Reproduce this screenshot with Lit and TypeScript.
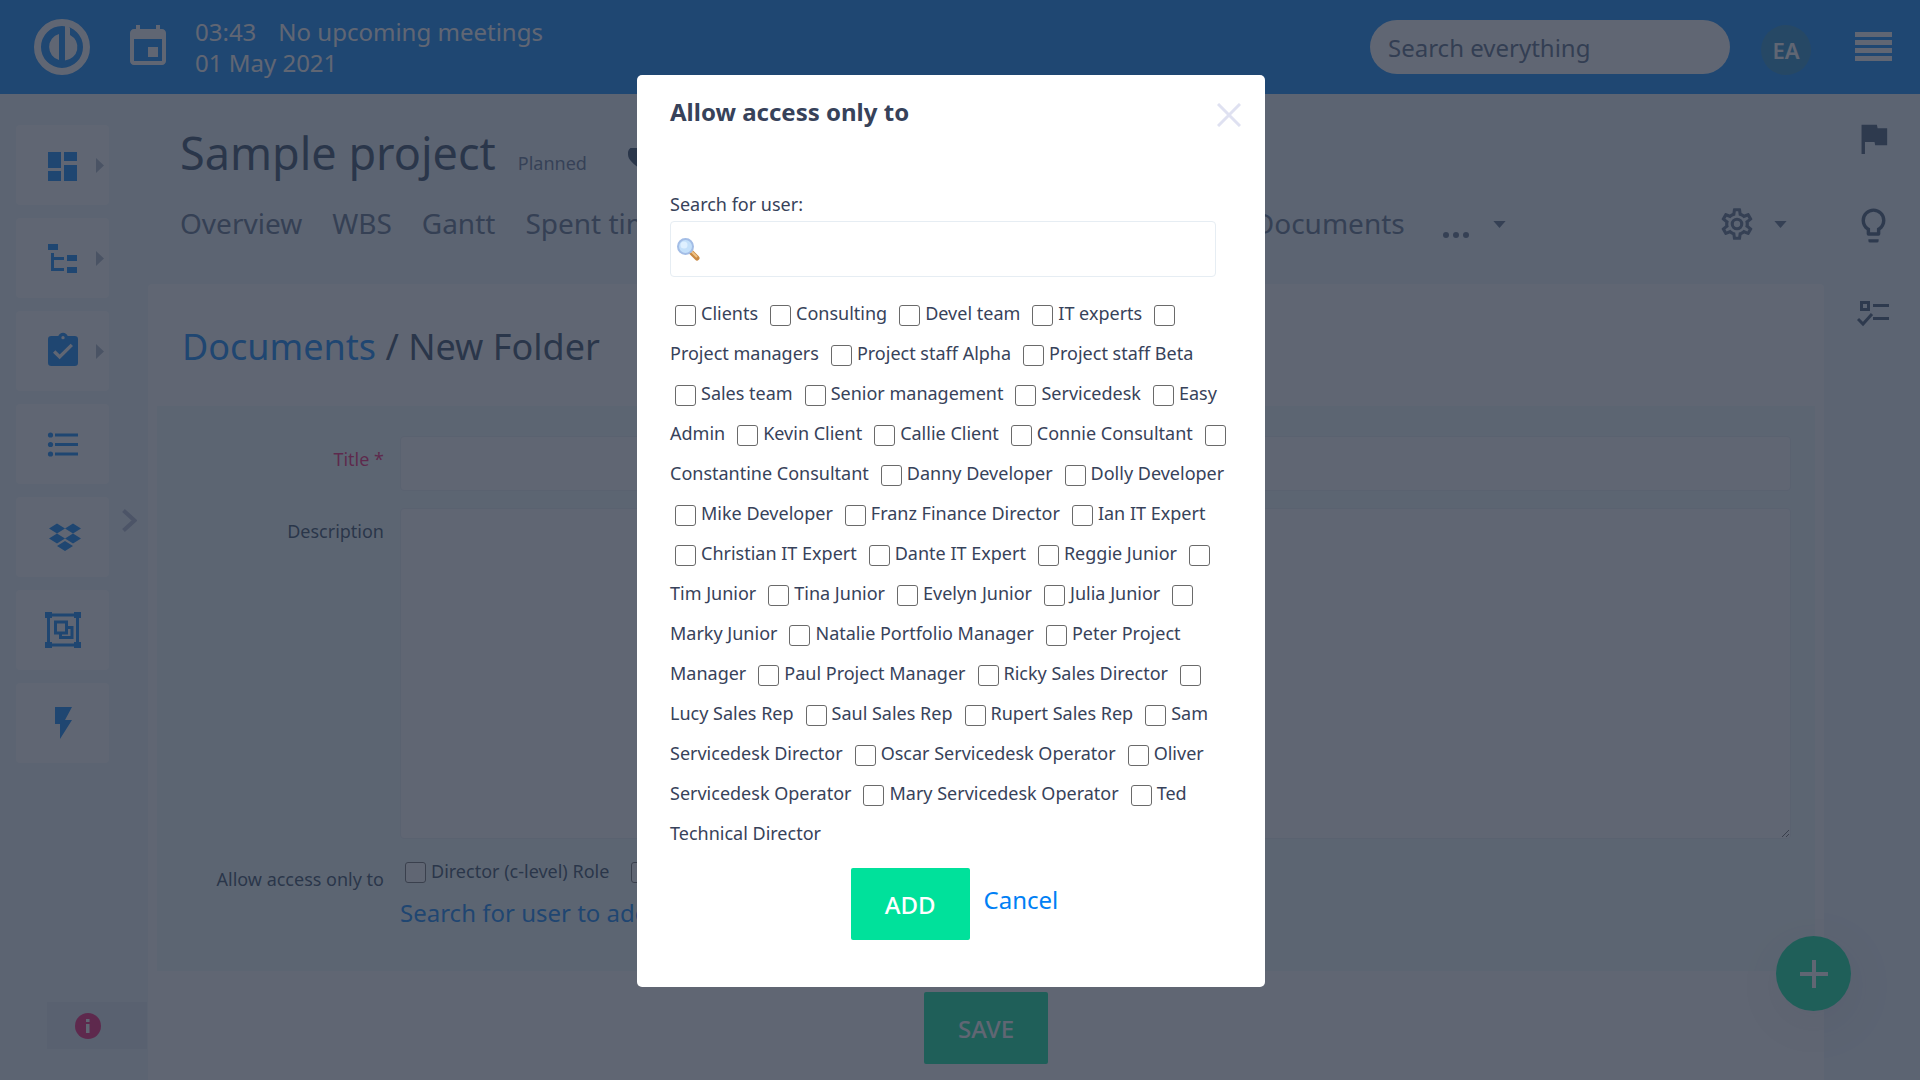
import { LitElement, html, css, svg, nothing } from "lit";
import { customElement } from "lit/decorators.js";

// "^" starts the entry on a new line, "|" breaks the line in front of the text that follows it.
const USERS = [
  "Clients", "Consulting", "Devel team", "IT experts", "|Project managers",
  "Project staff Alpha", "Project staff Beta", "^Sales team", "Senior management",
  "Servicedesk", "Easy|Admin", "Kevin Client", "Callie Client", "Connie Consultant",
  "|Constantine Consultant", "Danny Developer", "Dolly Developer", "^Mike Developer",
  "Franz Finance Director", "Ian IT Expert", "^Christian IT Expert", "Dante IT Expert",
  "Reggie Junior", "|Tim Junior", "Tina Junior", "Evelyn Junior", "Julia Junior",
  "|Marky Junior", "Natalie Portfolio Manager", "Peter Project|Manager",
  "Paul Project Manager", "Ricky Sales Director", "|Lucy Sales Rep", "Saul Sales Rep",
  "Rupert Sales Rep", "Sam|Servicedesk Director", "Oscar Servicedesk Operator",
  "Oliver|Servicedesk Operator", "Mary Servicedesk Operator", "Ted|Technical Director",
];

const COG =
  "M12,8A4,4 0 0,1 16,12A4,4 0 0,1 12,16A4,4 0 0,1 8,12A4,4 0 0,1 12,8M12,10A2,2 0 0,0 10,12A2,2 0 0,0 12,14A2,2 0 0,0 14,12A2,2 0 0,0 12,10M10,22C9.75,22 9.54,21.82 9.5,21.58L9.13,18.93C8.5,18.68 7.96,18.34 7.44,17.94L4.95,18.95C4.73,19.03 4.46,18.95 4.34,18.73L2.34,15.27C2.21,15.05 2.27,14.78 2.46,14.63L4.57,12.97L4.5,12L4.57,11L2.46,9.37C2.27,9.22 2.21,8.95 2.34,8.73L4.34,5.27C4.46,5.05 4.73,4.96 4.95,5.05L7.44,6.05C7.96,5.66 8.5,5.32 9.13,5.07L9.5,2.42C9.54,2.18 9.75,2 10,2H14C14.25,2 14.46,2.18 14.5,2.42L14.87,5.07C15.5,5.32 16.04,5.66 16.56,6.05L19.05,5.05C19.27,4.96 19.54,5.05 19.66,5.27L21.66,8.73C21.79,8.95 21.73,9.22 21.54,9.37L19.43,11L19.5,12L19.43,13L21.54,14.63C21.73,14.78 21.79,15.05 21.66,15.27L19.66,18.73C19.54,18.95 19.27,19.04 19.05,18.95L16.56,17.95C16.04,18.34 15.5,18.68 14.87,18.93L14.5,21.58C14.46,21.82 14.25,22 14,22H10M11.25,4L10.88,6.61C9.68,6.86 8.62,7.5 7.85,8.39L5.44,7.35L4.69,8.65L6.8,10.2C6.4,11.37 6.4,12.64 6.8,13.8L4.68,15.36L5.43,16.66L7.86,15.62C8.63,16.5 9.68,17.14 10.87,17.38L11.24,20H12.76L13.13,17.39C14.32,17.14 15.37,16.5 16.14,15.62L18.57,16.66L19.32,15.36L17.2,13.81C17.6,12.64 17.6,11.37 17.2,10.2L19.31,8.65L18.56,7.35L16.15,8.39C15.38,7.5 14.32,6.86 13.12,6.62L12.75,4H11.25Z";

const BULB =
  "M12,2A7,7 0 0,1 19,9C19,11.38 17.81,13.47 16,14.74V17A1,1 0 0,1 15,18H9A1,1 0 0,1 8,17V14.74C6.19,13.47 5,11.38 5,9A7,7 0 0,1 12,2M9,21V20H15V21A1,1 0 0,1 14,22H10A1,1 0 0,1 9,21M12,4A5,5 0 0,0 7,9C7,11.05 8.23,12.81 10,13.58V16H14V13.58C15.77,12.81 17,11.05 17,9A5,5 0 0,0 12,4Z";

// Each sidebar drawing sits on a 40 by 40 grid.
const MENU = [
  {
    label: "Dashboard", more: true,
    art: svg`<path d="M5 7h13v16H5zM5 26h13v10H5zM21 20h13v16H21zM21 7h13v9H21z"/>`,
  },
  {
    label: "Projects", more: true,
    art: svg`<path d="M5 6h10v6H5zM24 17h10v6H24zM24 29h10v6H24z"/><path d="M8 15h3v4h10v3h-10v8h10v3H8z"/>`,
  },
  {
    label: "Tasks", more: true,
    art: svg`<path transform="scale(1.667)" d="M10,17L6,13L7.41,11.59L10,14.17L16.59,7.58L18,9M12,3A1,1 0 0,1 13,4A1,1 0 0,1 12,5A1,1 0 0,1 11,4A1,1 0 0,1 12,3M19,3H14.82C14.4,1.84 13.3,1 12,1C10.7,1 9.6,1.84 9.18,3H5A2,2 0 0,0 3,5V19A2,2 0 0,0 5,21H19A2,2 0 0,0 21,19V5A2,2 0 0,0 19,3Z"/>`,
  },
  {
    label: "List", more: false,
    art: svg`<circle cx="7.500" cy="11" r="2.600"/><circle cx="7.500" cy="20.500" r="2.600"/><circle cx="7.500" cy="30" r="2.600"/><path d="M12 9.500h23v3H12zM12 19h23v3H12zM12 28.500h23v3H12z"/>`,
  },
  {
    label: "Dropbox", more: false,
    art: svg`<path d="M14 6.500l8 5-8 5-8-5zM30 6.500l8 5-8 5-8-5zM14 16.500l8 5-8 5-8-5zM30 16.500l8 5-8 5-8-5zM22 24l8 5-8 5-8-5z"/>`,
  },
  {
    label: "Objects", more: false,
    art: svg`<path d="M2 2h7v6H2zM31 2h7v6h-7zM2 32h7v6H2zM31 32h7v6h-7z"/><path d="M5.500 5h29v30h-29zM12.500 12h11v11h-11zM17.500 23v4.500h11.500v-10h-5.500" fill="none" stroke="currentColor" stroke-width="3"/>`,
  },
  {
    label: "Actions", more: false,
    art: svg`<path d="M12 4h17l-7 13h7L17 36V21h-5z"/>`,
  },
];

@customElement("app-root")
export class AppRoot extends LitElement {
  static styles = css`
    :host {
      display: block;
      font-family: "Noto Sans", "Open Sans", sans-serif;
      font-size: 18px;
      line-height: 24px;
      color: #2e4560;
    }
    * { box-sizing: border-box; }
    h1, h2, p { margin: 0; font-weight: 400; }
    a { color: #0080f5; text-decoration: none; }
    button {
      font: inherit;
      color: inherit;
      border: 0;
      padding: 0;
      background: none;
      cursor: pointer;
    }
    svg { display: block; fill: currentColor; flex: none; }

    .page {
      position: relative;
      height: 100vh;
      overflow: hidden;
      display: flex;
      flex-direction: column;
      background: #eef6fb;
    }
    .topbar {
      flex: none;
      height: 94px;
      display: flex;
      align-items: center;
      padding: 0 28px 0 34px;
      background: #0084fa;
      color: #fff;
      font-size: 24px;
      line-height: 31px;
    }
    .calendar { margin: 0 23px 0 34px; }
    .clock { display: flex; gap: 22px; }
    .search {
      width: 360px;
      height: 54px;
      margin-left: auto;
      padding: 0 18px;
      border: 0;
      border-radius: 27px;
      background: #fff;
      font: inherit;
    }
    .search::placeholder { color: #4f6480; opacity: 1; }
    .avatar {
      display: grid;
      place-items: center;
      width: 50px;
      height: 50px;
      margin: 6px 44px 0 31px;
      border-radius: 50%;
      background: #1f8ac8;
      font-size: 22px;
      font-weight: 600;
    }

    .body {
      flex: 1;
      min-height: 0;
      display: grid;
      grid-template-columns: 148px minmax(0, 1fr) 96px;
    }
    .side { display: flex; gap: 13px; padding: 31px 12px 0 16px; }
    .menu { display: flex; flex-direction: column; gap: 13px; }
    .tile {
      display: grid;
      grid-template-columns: 1fr 40px 1fr;
      align-items: center;
      width: 93px;
      height: 80px;
      border-radius: 4px;
      background: #fff;
      color: #0080f5;
    }
    .tile svg:first-child { grid-column: 2; }
    .more { color: #a9b3c4; justify-self: end; margin-right: 5px; }
    .toggle { align-self: flex-start; margin-top: 384px; color: #b0b8ce; }
    .notice {
      position: absolute;
      left: 47px;
      bottom: 31px;
      display: grid;
      place-items: center;
      width: 100px;
      height: 47px;
      padding-right: 18px;
      background: #e2eaf2;
      color: #f5126a;
    }

    .main { display: flex; flex-direction: column; min-height: 0; }
    .head { padding: 29px 37px 41px 32px; }
    .title { display: flex; align-items: baseline; }
    .title h1 { font-size: 45px; line-height: 60px; }
    .state { margin: 0 41px 0 22px; color: #5b7090; }
    .tabs {
      display: flex;
      align-items: center;
      gap: 30px;
      height: 40px;
      margin-top: 20px;
      font-size: 28px;
      line-height: 40px;
      color: #566a86;
    }
    .tabs a { color: inherit; }
    .tabs .docs { margin-left: 556px; }
    .tools { display: flex; align-items: center; gap: 18px; margin: 2px 0 0 auto; }
    .dots { display: flex; align-items: center; gap: 24px; height: 40px; margin: 2px 0 0 8px; }
    .dots svg:first-child { margin-top: 21px; }

    .card {
      flex: 1;
      padding: 39px 9px 0;
      border-radius: 4px 4px 0 0;
      background: #fff;
      min-height: 0;
    }
    .card h2 { padding: 0 25px 35px; font-size: 36px; line-height: 48px; }
    .form {
      display: grid;
      grid-template-columns: 227px minmax(0, 1fr);
      gap: 17px 16px;
      padding: 30px 24px 41px 0;
      background: #f0fcfb;
    }
    .name { padding-top: 11px; text-align: right; }
    .required { color: #f5126a; }
    .field {
      display: block;
      width: 100%;
      height: 55px;
      border: 1px solid #e6edf3;
      border-radius: 4px;
      background: #fff;
      font: inherit;
    }
    textarea.field { height: 331px; resize: vertical; }
    .roles { white-space: nowrap; line-height: 30px; }
    .link { display: block; margin-top: 10px; font-size: 24px; line-height: 34px; }
    .save { display: block; margin: 21px auto 0; }
    .button {
      height: 72px;
      padding: 2px 34px 0;
      border-radius: 2px;
      background: #00e19b;
      color: #fff;
      font-size: 24px;
      font-weight: 500;
    }

    .rail {
      display: flex;
      flex-direction: column;
      align-items: center;
      gap: 46px;
      padding: 24px 0 0 2px;
      color: #3d536f;
    }
    .fab {
      position: absolute;
      right: 69px;
      bottom: 69px;
      display: grid;
      place-items: center;
      width: 75px;
      height: 75px;
      border-radius: 50%;
      background: #00e19b;
      color: #fff;
      box-shadow: 0 12px 60px rgba(60, 40, 60, 0.12);
    }

    .shade {
      position: fixed;
      inset: 0;
      display: flex;
      align-items: flex-start;
      justify-content: center;
      padding: 75px 18px 0 0;
      background: rgba(42, 50, 67, 0.745);
    }
    .dialog {
      width: 628px;
      padding: 21px 33px 47px;
      border-radius: 5px;
      background: #fff;
      color: #37425a;
    }
    .dialog header { display: flex; justify-content: space-between; }
    .dialog h2 { font-size: 24px; line-height: 32px; font-weight: 700; }
    .close { height: 38px; margin-right: -9px; color: #dfe1f1; }
    .lookup { display: block; margin-top: 58px; }
    .finder { position: relative; width: 546px; margin-top: 5px; }
    .finder .field { height: 56px; padding-left: 36px; }
    .finder svg { position: absolute; left: 6px; top: 16px; }
    .users { margin-top: 16px; line-height: 40px; white-space: nowrap; }
    .users label { margin-right: 7px; }
    .roles label { margin-right: 12px; }
    .check {
      appearance: none;
      width: 21px;
      height: 21px;
      margin: 0 5px;
      border: 1px solid #6a6a6a;
      border-radius: 3px;
      background: #fff;
      vertical-align: -6px;
    }
    .roles .check { vertical-align: -5px; }
    .actions {
      display: flex;
      justify-content: center;
      gap: 14px;
      margin: 15px 0 0 7px;
    }
    .cancel { padding-top: 15px; font-size: 24px; line-height: 34px; }
  `;

  private caret() {
    return html`<svg width="13" height="7" viewBox="0 0 14 8"><path d="M0 0h14L7 8z" /></svg>`;
  }

  private user(entry: string) {
    const onNewLine = entry.startsWith("^");
    const parts = entry.replace("^", "").split("|");
    return html`${onNewLine ? html`<br />` : nothing}<label
        ><input class="check" type="checkbox" />${parts.map(
          (part, i) => html`${i ? html`<br />` : nothing}${part}`
        )}</label
      >`;
  }

  render() {
    return html`
      <div class="page">
        <header class="topbar">
          <svg width="56" height="56" viewBox="0 0 56 56">
            <circle cx="28" cy="28" r="24.500" fill="none" stroke="currentColor" stroke-width="7" />
            <path d="M25 15v26A13.500 13.500 0 0 1 25 15zM31 5h1l4 4v7A13.500 13.500 0 0 1 31 41.500z" />
          </svg>
          <svg class="calendar" width="48" height="48" viewBox="0 0 24 24">
            <path d="M17 12h-5v5h5v-5zM16 1v2H8V1H6v2H5c-1.110 0-1.990.9-1.990 2L3 19c0 1.100.890 2 2 2h14c1.100 0 2-.9 2-2V5c0-1.100-.9-2-2-2h-1V1h-2zm3 18H5V8h14v11z" />
          </svg>
          <div>
            <div class="clock"><span>03:43</span><span>No upcoming meetings</span></div>
            <div>01 May 2021</div>
          </div>
          <input class="search" type="search" placeholder="Search everything" aria-label="Search everything" />
          <button class="avatar">EA</button>
          <button aria-label="Menu">
            <svg width="37" height="30" viewBox="0 0 37 30"><path d="M0 0h37v5H0zM0 8h37v5H0zM0 16h37v5H0zM0 24h37v5H0z" /></svg>
          </button>
        </header>

        <div class="body">
          <aside class="side">
            <nav class="menu">
              ${MENU.map(
                (item) => html`<button class="tile" aria-label=${item.label}>
                  <svg width="40" height="40" viewBox="0 0 40 40">${item.art}</svg>
                  ${item.more
                    ? html`<svg class="more" width="8" height="15" viewBox="0 0 8 15"><path d="M0 0l8 7.500L0 15z" /></svg>`
                    : nothing}
                </button>`
              )}
            </nav>
            <button class="toggle" aria-label="Expand sidebar">
              <svg width="15" height="23" viewBox="0 0 15 23"><path d="M1.500 1.500l11 10-11 10" fill="none" stroke="currentColor" stroke-width="4" /></svg>
            </button>
          </aside>

          <main class="main">
            <div class="head">
              <div class="title">
                <h1>Sample project</h1>
                <span class="state">Planned</span>
                <svg width="26" height="22" viewBox="0 0 26 22"><path d="M13 22C6 16 0 12 0 6.500A6.500 6.500 0 0 1 13 4a6.500 6.500 0 0 1 13 2.500C26 12 20 16 13 22z" /></svg>
              </div>
              <nav class="tabs">
                <a href="#">Overview</a>
                <a href="#">WBS</a>
                <a href="#">Gantt</a>
                <a href="#">Spent time</a>
                <a class="docs" href="#">Documents</a>
                <button class="dots" aria-label="More tabs">
                  <svg width="26" height="6" viewBox="0 0 26 6"><circle cx="3" cy="3" r="3" /><circle cx="13" cy="3" r="3" /><circle cx="23" cy="3" r="3" /></svg>
                  ${this.caret()}
                </button>
                <button class="tools" aria-label="Project settings">
                  <svg width="38" height="38" viewBox="0 0 24 24"><path d=${COG} /></svg>
                  ${this.caret()}
                </button>
              </nav>
            </div>

            <section class="card">
              <h2><a href="#">Documents</a> / New Folder</h2>
              <form class="form">
                <label class="name required" for="title">Title *</label>
                <input class="field" id="title" />
                <label class="name" for="description">Description</label>
                <textarea class="field" id="description"></textarea>
                <div class="name">Allow access only to</div>
                <div>
                  <div class="roles">
                    <label><input class="check" type="checkbox" />Director (c-level) Role</label>
                    <input class="check" type="checkbox" aria-label="Role" />
                  </div>
                  <a class="link" href="#">Search for user to add</a>
                </div>
              </form>
              <button class="button save">SAVE</button>
            </section>
          </main>

          <aside class="rail">
            <svg width="41" height="41" viewBox="0 0 24 24"><path d="M14.400,6L14,4H5V21H7V14H12.600L13,16H20V6H14.400Z" /></svg>
            <svg width="41" height="41" viewBox="0 0 24 24"><path d=${BULB} /></svg>
            <svg width="33" height="41" viewBox="0 0 33 41">
              <path d="M3 9h10v10H3zM6 12v4h4v-4zM16 12h16v3H16zM16 25h16v3H16z" fill-rule="evenodd" />
              <path d="M1 27l5 5 9-10" fill="none" stroke="currentColor" stroke-width="3" />
            </svg>
          </aside>
        </div>

        <button class="notice" aria-label="Notice">
          <svg width="26" height="26" viewBox="0 0 26 26">
            <circle cx="13" cy="13" r="13" />
            <path d="M11 6h3.500v3H11zM11 11h3.500v9H11z" fill="#fff" />
          </svg>
        </button>
        <button class="fab" aria-label="Add">
          <svg width="28" height="28" viewBox="0 0 28 28"><path d="M12 0h4v12h12v4H16v12h-4V16H0v-4h12z" /></svg>
        </button>
      </div>

      <div class="shade">
        <section class="dialog" role="dialog" aria-labelledby="dialog-title">
          <header>
            <h2 id="dialog-title">Allow access only to</h2>
            <button class="close" aria-label="Close">
              <svg width="24" height="24" viewBox="0 0 24 24"><path d="M1 1l22 22M23 1L1 23" fill="none" stroke="currentColor" stroke-width="3" /></svg>
            </button>
          </header>
          <label class="lookup" for="lookup">Search for user:</label>
          <div class="finder">
            <input class="field" id="lookup" type="text" />
            <svg width="24" height="24" viewBox="0 0 24 24">
              <path d="M15 15l6 6" stroke="#c98a45" stroke-width="5" stroke-linecap="round" />
              <path d="M15.500 14.500l5 5" stroke="#efc184" stroke-width="2" stroke-linecap="round" />
              <circle cx="9.500" cy="9.500" r="7.500" fill="#c4e0fa" stroke="#a3bde6" stroke-width="2" />
              <circle cx="8" cy="8" r="3.500" fill="#dff0ff" />
            </svg>
          </div>
          <div class="users">${USERS.map((entry) => this.user(entry))}</div>
          <div class="actions">
            <button class="button">ADD</button>
            <a class="cancel" href="#">Cancel</a>
          </div>
        </section>
      </div>
    `;
  }
}
